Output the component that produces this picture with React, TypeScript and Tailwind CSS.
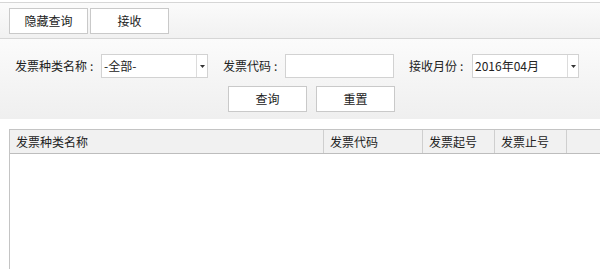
import React from "react";

const FONT = '"Microsoft YaHei", "Noto Sans CJK SC", "Liberation Sans", sans-serif';

function ToolButton({ label, className = "" }: { label: string; className?: string }) {
  return (
    <button
      className={`h-[26px] w-[79px] border border-[#c9c9c9] bg-white text-[12px] text-[#222] ${className}`}
    >
      {label}
    </button>
  );
}

function Select({ value, width }: { value: string; width: string }) {
  return (
    <div className={`flex h-[24px] ${width} border border-[#d2d2d2] bg-white`}>
      <div className="flex-1 pl-[2px] text-[12px] leading-[22px] text-[#222]">{value}</div>
      <div className="flex w-[11px] items-center justify-center border-l border-[#dcdcdc]">
        <svg width="5" height="3" viewBox="0 0 5 3">
          <path d="M0 0h5L2.5 3z" fill="#333" />
        </svg>
      </div>
    </div>
  );
}

function Label({ text, width, className = "" }: { text: string; width: string; className?: string }) {
  return (
    <span className={`flex ${width} ${className}`}>
      {text}
      <span className="ml-[3px]">:</span>
    </span>
  );
}

const columns = [
  { title: "发票种类名称", w: "w-[314px] border-r" },
  { title: "发票代码", w: "w-[99px] border-r" },
  { title: "发票起号", w: "w-[72px] border-r" },
  { title: "发票止号", w: "w-[72px] border-r" },
  { title: "", w: "flex-1" },
];

export default function App() {
  return (
    <div
      className="flex h-[269px] w-[600px] flex-col overflow-hidden bg-white text-[#222]"
      style={{ fontFamily: FONT }}
    >
      {/* 顶部工具条 */}
      <div className="mt-[2px] flex h-[37px] items-start gap-[2px] border-y border-[#d6d6d6] bg-gradient-to-b from-[#fbfbfb] to-[#f1f1f1] pl-[9px] pt-[5px]">
        <ToolButton label="隐藏查询" />
        <ToolButton label="接收" />
      </div>

      {/* 查询条件 */}
      <div className="flex h-[80px] flex-col bg-gradient-to-b from-[#fbfbfb] to-[#efefef] pt-[15px]">
        <div className="flex h-[24px] items-center text-[12px]">
          <Label text="发票种类名称" width="w-[86px]" className="ml-[15px]" />
          <Select value="-全部-" width="w-[107px]" />
          <Label text="发票代码" width="w-[62px]" className="ml-[15px]" />
          <div className="h-[24px] w-[109px] border border-[#d2d2d2] bg-white" />
          <Label text="接收月份" width="w-[63px]" className="ml-[15px]" />
          <Select value="2016年04月" width="w-[107px]" />
        </div>
        <div className="mt-[8px] flex gap-[9px] pl-[228px]">
          <ToolButton label="查询" />
          <ToolButton label="重置" />
        </div>
      </div>

      {/* 列表 */}
      <div className="ml-[9px] mt-[10px] flex flex-1 flex-col border-l border-t border-[#c4c4c4]">
        <div className="flex h-[24px] border-b border-[#bdbdbd] bg-[#f1f1f1]">
          {columns.map((c, i) => (
            <div
              key={i}
              className={`${c.w} shrink-0 border-[#cfcfcf] pl-[6px] text-[12px] leading-[23px]`}
            >
              {c.title}
            </div>
          ))}
        </div>
        <div className="flex-1 bg-white" />
      </div>
    </div>
  );
}
